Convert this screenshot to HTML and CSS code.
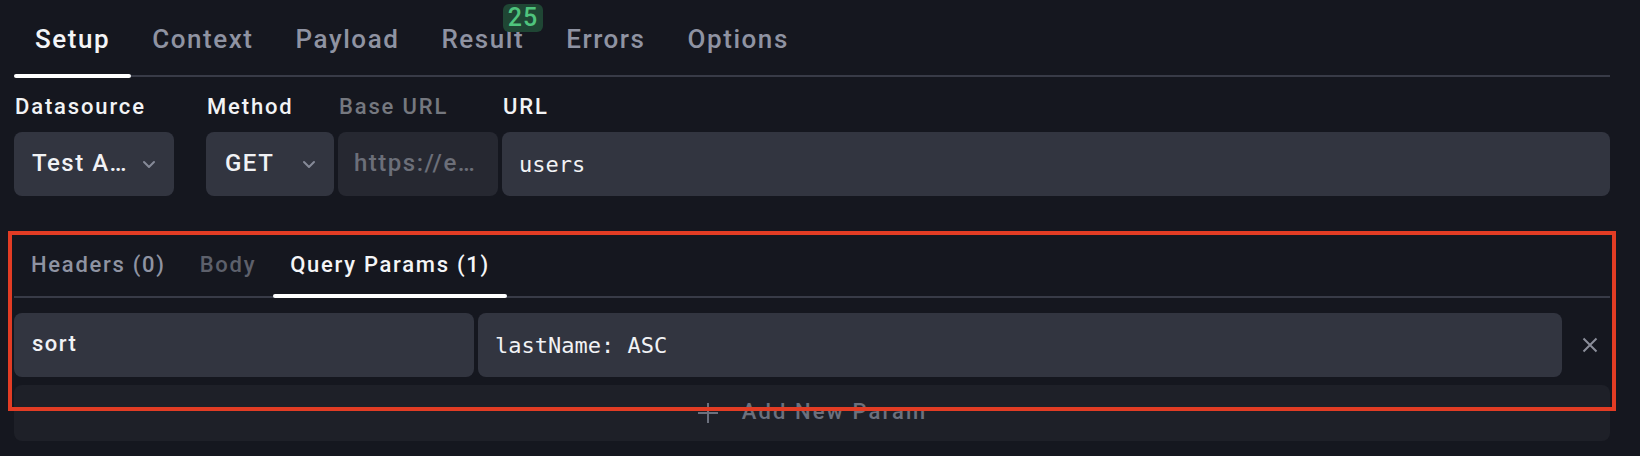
FILE: index.html
```html
<!DOCTYPE html>
<html>
<head>
<meta charset="utf-8">
<link rel="stylesheet" href="styles.css">
</head>
<body>
<div class="page">
  <nav class="tabs">
    <div class="tab active">Setup</div>
    <div class="tab">Context</div>
    <div class="tab">Payload</div>
    <div class="tab">Result<span class="badge">25</span></div>
    <div class="tab">Errors</div>
    <div class="tab">Options</div>
  </nav>

  <div class="form">
    <div class="field field-ds">
      <div class="label">Datasource</div>
      <div class="control select">
        <span class="value">Test A…</span>
        <svg class="chev" width="14" height="9" viewBox="0 0 14 9"><path d="M2 2l5 5 5-5" fill="none" stroke="currentColor" stroke-width="2" stroke-linecap="round" stroke-linejoin="round"/></svg>
      </div>
    </div>
    <div class="field field-method">
      <div class="label">Method</div>
      <div class="control select">
        <span class="value">GET</span>
        <svg class="chev" width="14" height="9" viewBox="0 0 14 9"><path d="M2 2l5 5 5-5" fill="none" stroke="currentColor" stroke-width="2" stroke-linecap="round" stroke-linejoin="round"/></svg>
      </div>
    </div>
    <div class="field field-base">
      <div class="label muted">Base URL</div>
      <div class="control disabled"><span class="value">https://e…</span></div>
    </div>
    <div class="field field-url">
      <div class="label">URL</div>
      <div class="control mono"><span class="value">users</span></div>
    </div>
  </div>

  <section class="params">
    <div class="subtabs">
      <div class="subtab">Headers (0)</div>
      <div class="subtab dim">Body</div>
      <div class="subtab active">Query Params (1)</div>
    </div>
    <div class="param-row">
      <div class="control key"><span class="value">sort</span></div>
      <div class="control mono val"><span class="value">lastName: ASC</span></div>
      <div class="remove">
        <svg width="16" height="16" viewBox="0 0 16 16"><path d="M1.5 1.5l13 13M14.5 1.5l-13 13" fill="none" stroke="currentColor" stroke-width="2"/></svg>
      </div>
    </div>
    <div class="add">
      <svg width="22" height="22" viewBox="0 0 22 22"><path d="M11 1v20M1 11h20" fill="none" stroke="currentColor" stroke-width="2"/></svg>
      <span>Add New Param</span>
    </div>
    <div class="highlight"></div>
  </section>
</div>
</body>
</html>
```

FILE: styles.css
```css
* { box-sizing: border-box; }

html, body {
  margin: 0;
  background: #15171f;
}

body {
  font-family: Roboto, "Noto Sans", sans-serif;
  font-weight: 500;
  color: #f1f2f5;
}

.page {
  width: 1640px;
  height: 456px;
  padding: 0 30px 0 14px;
  overflow: hidden;
}

/* Top tabs */
.tabs {
  display: flex;
  border-bottom: 2px solid #383b47;
}

.tab {
  position: relative;
  padding: 24px 21px 21px;
  font-size: 26px;
  line-height: 30px;
  letter-spacing: 1.55px;
  color: #8f93a2;
}

.tab.active {
  color: #f4f5f7;
}

.tab.active::after {
  content: "";
  position: absolute;
  left: 0;
  right: 0;
  bottom: -3px;
  height: 4px;
  border-radius: 2px;
  background: #ffffff;
}

.badge {
  position: absolute;
  top: 4px;
  right: 2px;
  height: 28px;
  padding: 0 5px;
  border-radius: 6px;
  background: #1f4634;
  color: #4fc47d;
  font-size: 25px;
  line-height: 28px;
  letter-spacing: 1px;
}

/* Form row */
.form {
  display: flex;
  margin-top: 17px;
}

.field {
  display: flex;
  flex-direction: column;
  gap: 12px;
}

.field-ds { width: 160px; margin-right: 32px; }
.field-method { width: 128px; margin-right: 4px; }
.field-base { width: 160px; margin-right: 4px; }
.field-url { flex: 1; }

.label {
  font-size: 22px;
  line-height: 26px;
  letter-spacing: 1.85px;
  padding-left: 1px;
  color: #f2f3f5;
}

.label.muted {
  color: #75787f;
}

.control {
  display: flex;
  align-items: center;
  height: 64px;
  padding: 0 18px 3px;
  border-radius: 8px;
  background: #323540;
  font-size: 24px;
  letter-spacing: 1.5px;
  color: #f1f2f5;
  white-space: nowrap;
  overflow: hidden;
}

.select {
  justify-content: space-between;
}

.select .chev {
  margin-top: 3px;
}

.field-method .select {
  padding-left: 19px;
}

.chev {
  color: #868a98;
  flex: none;
}

.control.disabled {
  background: #262831;
  padding-left: 16px;
  color: #6c6f79;
}

.control.mono {
  font-family: "DejaVu Sans Mono", "Liberation Mono", monospace;
  font-weight: 400;
  font-size: 22px;
  letter-spacing: 0;
  padding: 0 18px 0 17px;
}

/* Params section */
.params {
  position: relative;
  margin-top: 40px;
}

.subtabs {
  display: flex;
  border-bottom: 2px solid #383b47;
}

.subtab {
  position: relative;
  padding: 16px 17px 18px;
  font-size: 22px;
  line-height: 26px;
  letter-spacing: 1.72px;
  color: #8f93a2;
}

.subtab.dim {
  color: #5d606b;
}

.subtab.active {
  color: #f4f5f7;
}

.subtab.active::after {
  content: "";
  position: absolute;
  left: 0;
  right: 0;
  bottom: -2px;
  height: 4px;
  border-radius: 2px;
  background: #ffffff;
}

.param-row {
  display: flex;
  gap: 4px;
  margin-top: 15px;
}

.control.key {
  width: 460px;
  flex: none;
  font-size: 22px;
}

.control.val {
  flex: 1;
}

.remove {
  width: 44px;
  flex: none;
  display: flex;
  align-items: center;
  padding-left: 16px;
  color: #8b8e9a;
}

.add {
  display: flex;
  align-items: center;
  justify-content: center;
  gap: 23px;
  height: 56px;
  margin-top: 8px;
  padding-bottom: 3px;
  border-radius: 8px;
  background: #1e2028;
  color: #6c707d;
  font-size: 22px;
  letter-spacing: 2.1px;
}

.add svg {
  margin-top: 3px;
}

.highlight {
  position: absolute;
  top: -5px;
  left: -6px;
  right: -6px;
  height: 180px;
  border: 4px solid #e23c24;
  pointer-events: none;
}
```
